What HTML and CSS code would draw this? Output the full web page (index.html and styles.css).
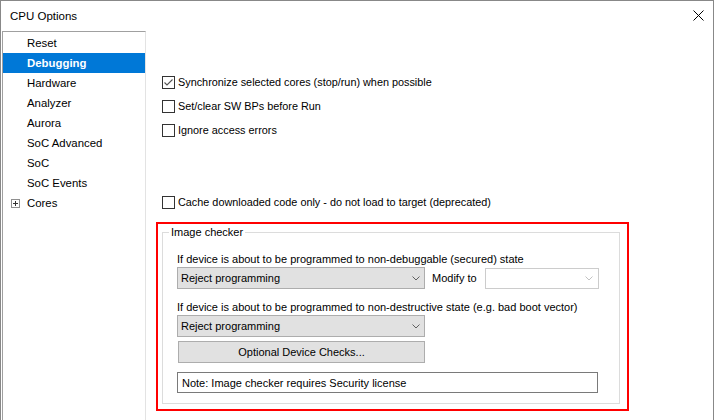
FILE: index.html
```html
<!DOCTYPE html>
<html>
<head>
<meta charset="utf-8">
<title>CPU Options</title>
<link rel="stylesheet" href="styles.css">
</head>
<body>
<div class="window">
  <div class="titlebar">
    <span class="title">CPU Options</span>
    <svg class="close" width="11" height="11" viewBox="0 0 11 11"><path d="M0.5 0.5 L10.5 10.5 M10.5 0.5 L0.5 10.5" stroke="#000" stroke-width="1" fill="none"/></svg>
  </div>
  <div class="content">
    <ul class="tree">
      <li class="item">Reset</li>
      <li class="item selected">Debugging</li>
      <li class="item">Hardware</li>
      <li class="item">Analyzer</li>
      <li class="item">Aurora</li>
      <li class="item">SoC Advanced</li>
      <li class="item">SoC</li>
      <li class="item">SoC Events</li>
      <li class="item parent"><span class="expander"><svg width="9" height="9" viewBox="0 0 9 9"><rect x="0.5" y="0.5" width="8" height="8" fill="#fff" stroke="#8f8f8f"/><path d="M2 4.5 H7 M4.5 2 V7" stroke="#333" stroke-width="1"/></svg></span>Cores</li>
    </ul>
    <div class="panel">
      <div class="checks">
        <label class="check"><span class="box"><svg width="13" height="13" viewBox="0 0 13 13"><path d="M2.5 6.5 L5 9 L10.5 3.5" stroke="#555" stroke-width="1.1" fill="none"/></svg></span><span class="ctext">Synchronize selected cores (stop/run) when possible</span></label>
        <label class="check"><span class="box"></span><span class="ctext">Set/clear SW BPs before Run</span></label>
        <label class="check"><span class="box"></span><span class="ctext">Ignore access errors</span></label>
        <div class="gap"></div>
        <label class="check"><span class="box"></span><span class="ctext">Cache downloaded code only - do not load to target (deprecated)</span></label>
      </div>
      <div class="annot">
        <fieldset class="group">
          <legend class="legend">Image checker</legend>
          <div class="label first">If device is about to be programmed to non-debuggable (secured) state</div>
          <div class="row">
            <div class="combo"><span>Reject programming</span><svg class="chev" width="8" height="5" viewBox="0 0 8 5"><path d="M0.5 0.5 L4 4 L7.5 0.5" stroke="#606060" fill="none"/></svg></div>
            <span class="modify">Modify to</span>
            <div class="combo disabled"><svg class="chev" width="8" height="5" viewBox="0 0 8 5"><path d="M0.5 0.5 L4 4 L7.5 0.5" stroke="#c2c2c2" fill="none"/></svg></div>
          </div>
          <div class="label">If device is about to be programmed to non-destructive state (e.g. bad boot vector)</div>
          <div class="combo"><span>Reject programming</span><svg class="chev" width="8" height="5" viewBox="0 0 8 5"><path d="M0.5 0.5 L4 4 L7.5 0.5" stroke="#606060" fill="none"/></svg></div>
          <div class="button">Optional Device Checks...</div>
          <div class="note">Note: Image checker requires Security license</div>
        </fieldset>
      </div>
    </div>
  </div>
</div>
</body>
</html>
```
FILE: styles.css
```css
* { box-sizing: border-box; }
html, body { margin: 0; padding: 0; }
body {
  width: 714px;
  height: 420px;
  overflow: hidden;
  background: #fff;
  font-family: "Liberation Sans", Arial, sans-serif;
  font-size: 11px;
  color: #000;
}
.window {
  width: 714px;
  height: 420px;
  border: 1px solid #888;
  border-bottom: none;
  display: flex;
  flex-direction: column;
  background: #fff;
}
.titlebar {
  height: 30px;
  flex: none;
  display: flex;
  align-items: center;
  justify-content: space-between;
  padding: 0 9px 0 9px;
}
.title { font-size: 11.5px; }
.close { margin-bottom: 1px; }
.content {
  flex: 1;
  display: flex;
  margin-left: 1px;
}
.tree {
  list-style: none;
  margin: 0;
  padding: 1px 0 0 0;
  width: 144px;
  flex: none;
  border-top: 1px solid #a0a0a0;
  border-left: 1px solid #a0a0a0;
  border-right: 1px solid #e3e3e3;
}
.item {
  height: 20px;
  line-height: 20px;
  padding-left: 24px;
  font-size: 11.4px;
  white-space: nowrap;
}
.item.selected {
  background: #0078d7;
  color: #fff;
  font-weight: bold;
}
.item.parent {
  display: flex;
  align-items: center;
  padding-left: 8px;
}
.expander {
  width: 9px;
  height: 9px;
  margin-right: 7px;
  display: flex;
}
.panel {
  flex: 1;
  padding: 39px 0 0 10px;
}
.checks {
  margin-left: 6px;
  margin-bottom: 8px;
}
.check {
  display: flex;
  align-items: center;
  height: 24px;
  padding-top: 1px;
}
.box {
  width: 13px;
  height: 13px;
  border: 1px solid #333;
  background: #fff;
  margin-right: 3px;
  display: flex;
  flex: none;
}
.box svg { margin: -1px; }
.ctext { line-height: 13px; white-space: nowrap; font-size: 10.85px; }
.gap { height: 48px; }
.annot {
  width: 473px;
  border: 2px solid #f00;
  padding: 0 7px 5px 4px;
}
.group {
  margin: 0;
  width: 458px;
  border: 1px solid #dcdcdc;
  padding: 0 14px 10px 14px;
}
.legend {
  line-height: 16px;
  padding: 0 2px;
  margin-left: -8px;
}
.label {
  height: 16px;
  line-height: 16px;
  margin-top: 10px;
  margin-bottom: 0;
  white-space: nowrap;
}
.label.first { margin-top: 11px; }
.row {
  display: flex;
  align-items: center;
}
.combo {
  width: 248px;
  height: 22px;
  border: 1px solid #adadad;
  background: #e1e1e1;
  display: flex;
  align-items: center;
  padding: 0 4px 0 3px;
  flex: none;
}
.chev { margin-left: auto; }
.combo.disabled {
  width: 114px;
  height: 21px;
  background: #fff;
  border-color: #cccccc;
  margin-left: 8px;
  padding-right: 5px;
}
.modify { margin-left: 7px; white-space: nowrap; }
.button {
  width: 247px;
  height: 22px;
  margin: 4px 0 0 1px;
  border: 1px solid #adadad;
  background: #e1e1e1;
  display: flex;
  align-items: center;
  justify-content: center;
}
.note {
  width: 421px;
  height: 21px;
  margin-top: 9px;
  border: 1px solid #7a7a7a;
  background: #fff;
  display: flex;
  align-items: center;
  padding-left: 4px;
}
```
